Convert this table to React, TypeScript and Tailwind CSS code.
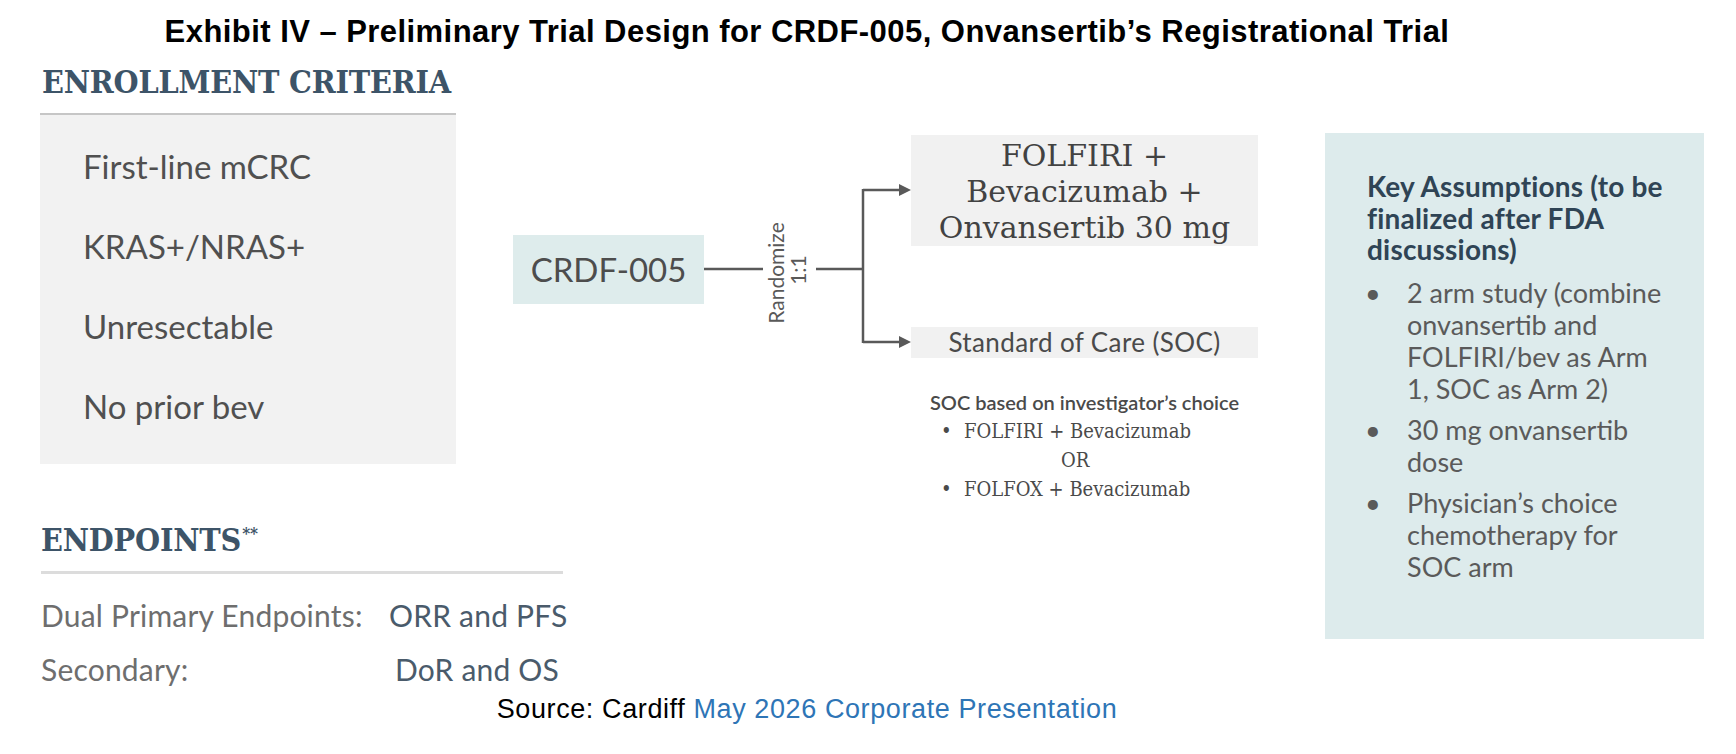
const slab = "font-['DejaVu_Serif',serif] font-stretch-condensed";
const sans = "font-['Lato',sans-serif]";

const criteria = ['First-line mCRC', 'KRAS+/NRAS+', 'Unresectable', 'No prior bev'];

const assumptions = [
  ['2 arm study (combine', 'onvansertib and', 'FOLFIRI/bev as Arm', '1, SOC as Arm 2)'],
  ['30 mg onvansertib', 'dose'],
  ['Physician’s choice', 'chemotherapy for', 'SOC arm'],
];

const Connectors = () => (
  <svg width="207" height="223" viewBox="0 0 207 223" className="shrink-0">
    <g stroke="#595959" strokeWidth="2.5" fill="none">
      <line x1="0" y1="134" x2="59" y2="134" />
      <line x1="112" y1="134" x2="159" y2="134" />
      <line x1="159" y1="54" x2="159" y2="208" />
      <line x1="159" y1="55" x2="198" y2="55" />
      <line x1="159" y1="207" x2="198" y2="207" />
    </g>
    <polygon points="195,49 207,55 195,61" fill="#595959" />
    <polygon points="195,201 207,207 195,213" fill="#595959" />
    <g fill="#595959" fontFamily="Lato, sans-serif" fontSize="21" textAnchor="middle">
      <text x="71" y="138" dominantBaseline="central" transform="rotate(-90 71 138)">Randomize</text>
      <text x="93" y="135" dominantBaseline="central" transform="rotate(-90 93 135)">1:1</text>
    </g>
  </svg>
);

const App = () => {
  return (
    <div className="w-[1736px] h-[754px] bg-white overflow-hidden">
      <div className="w-[1614px] pt-[14px] text-center font-['Liberation_Sans',Arial,sans-serif] font-bold text-[31px] leading-[36px] tracking-[0.45px] text-black whitespace-nowrap">
        Exhibit IV – Preliminary Trial Design for CRDF-005, Onvansertib’s Registrational Trial
      </div>

      <div className="flex items-start pl-[35px]">
        <div className="w-[1223px] shrink-0">
          <div className="flex items-start">
            {/* enrollment criteria */}
            <div className="w-[478px] shrink-0">
              <div className={`${slab} font-bold text-[32px] leading-[34px] tracking-[-0.2px] text-[#3d5468] mt-[15px] ml-[7px] whitespace-nowrap`}>
                ENROLLMENT CRITERIA
              </div>
              <div className="ml-[5px] w-[416px] h-[2px] bg-[#c6c6c6] mt-[14px]" />
              <div className={`ml-[5px] w-[416px] h-[349px] bg-[#f2f2f2] pt-[11px] pl-[43px] ${sans}`}>
                {criteria.map((c) => (
                  <div key={c} className="text-[33px] leading-[80px] text-[#505050] whitespace-nowrap">
                    {c}
                  </div>
                ))}
              </div>
            </div>

            {/* trial diagram */}
            <div className="mt-[85px] flex items-start shrink-0">
              <div className={`mt-[100px] w-[191px] h-[69px] bg-[#deecec] flex items-center justify-center ${sans} text-[33px] text-[#4d4d4d]`}>
                CRDF-005
              </div>
              <Connectors />
              <div className="w-[347px] shrink-0">
                <div className="h-[111px] pt-[3px] bg-[#f1f1f1] flex flex-col items-center justify-center font-['DejaVu_Serif',serif] text-[30px] leading-[36px] text-[#424242] whitespace-nowrap">
                  <span>FOLFIRI +</span>
                  <span>Bevacizumab +</span>
                  <span>Onvansertib 30 mg</span>
                </div>
                <div className={`mt-[81px] h-[31px] bg-[#f1f1f1] flex items-center justify-center ${sans} text-[26px] tracking-[0.4px] text-[#4a4a4a] whitespace-nowrap`}>
                  Standard of Care (SOC)
                </div>
                <div className={`mt-[29px] text-center ${sans} font-semibold text-[20px] leading-[30px] text-[#4a4a4a] whitespace-nowrap`}>
                  SOC based on investigator’s choice
                </div>
                <div className={`${slab} text-[20px] leading-[29px] text-[#4a4a4a] whitespace-nowrap`}>
                  <div className="flex pl-[30px]">
                    <span className="w-[23px]">•</span>
                    <span>FOLFIRI + Bevacizumab</span>
                  </div>
                  <div className="pl-[150px]">OR</div>
                  <div className="flex pl-[30px]">
                    <span className="w-[23px]">•</span>
                    <span>FOLFOX + Bevacizumab</span>
                  </div>
                </div>
              </div>
            </div>
          </div>

          {/* endpoints */}
          <div className="ml-[6px]">
            <div className={`${slab} font-bold text-[32px] leading-[36px] tracking-[-0.2px] text-[#3d5468] mt-[18px] whitespace-nowrap`}>
              ENDPOINTS
              <span className="text-[17px] leading-none align-top relative top-[3px] ml-[1px]">**</span>
            </div>
            <div className="w-[522px] h-[3px] bg-[#dcdcdc] mt-[13px]" />
            <div className={`mt-[14px] ${sans} text-[30px] leading-[54px] tracking-[0.2px]`}>
              <div className="flex whitespace-nowrap">
                <span className="w-[348px] shrink-0 text-[#6e6e6e]">Dual Primary Endpoints:</span>
                <span className="text-[#4a5b6b]">ORR and PFS</span>
              </div>
              <div className="flex whitespace-nowrap">
                <span className="w-[354px] shrink-0 text-[#6e6e6e]">Secondary:</span>
                <span className="text-[#4a5b6b]">DoR and OS</span>
              </div>
            </div>
          </div>
        </div>

        {/* key assumptions */}
        <div className={`ml-[67px] mt-[83px] w-[379px] h-[506px] shrink-0 bg-[#ddebec] pt-[38px] pl-[42px] ${sans}`}>
          <div className="font-bold text-[28px] leading-[31.5px] tracking-[0.2px] text-[#2f4455] whitespace-nowrap">
            Key Assumptions (to be
            <br />
            finalized after FDA
            <br />
            discussions)
          </div>
          <div className="mt-[11px] -ml-[2px] flex flex-col gap-[9px] text-[27px] leading-[32px] text-[#5a5a5a]">
            {assumptions.map((lines) => (
              <div key={lines[0]} className="flex">
                <span className="w-[42px] shrink-0">•</span>
                <span className="whitespace-nowrap">
                  {lines.map((l, i) => (
                    <span key={l}>
                      {i > 0 && <br />}
                      {l}
                    </span>
                  ))}
                </span>
              </div>
            ))}
          </div>
        </div>
      </div>

      <div className="w-[1614px] mt-[-3px] text-center font-['Liberation_Sans',Arial,sans-serif] text-[27px] leading-[32px] tracking-[0.6px] text-black whitespace-nowrap">
        Source: Cardiff <span className="text-[#2e75b6]">May 2026 Corporate Presentation</span>
      </div>
    </div>
  );
};

export default App;
